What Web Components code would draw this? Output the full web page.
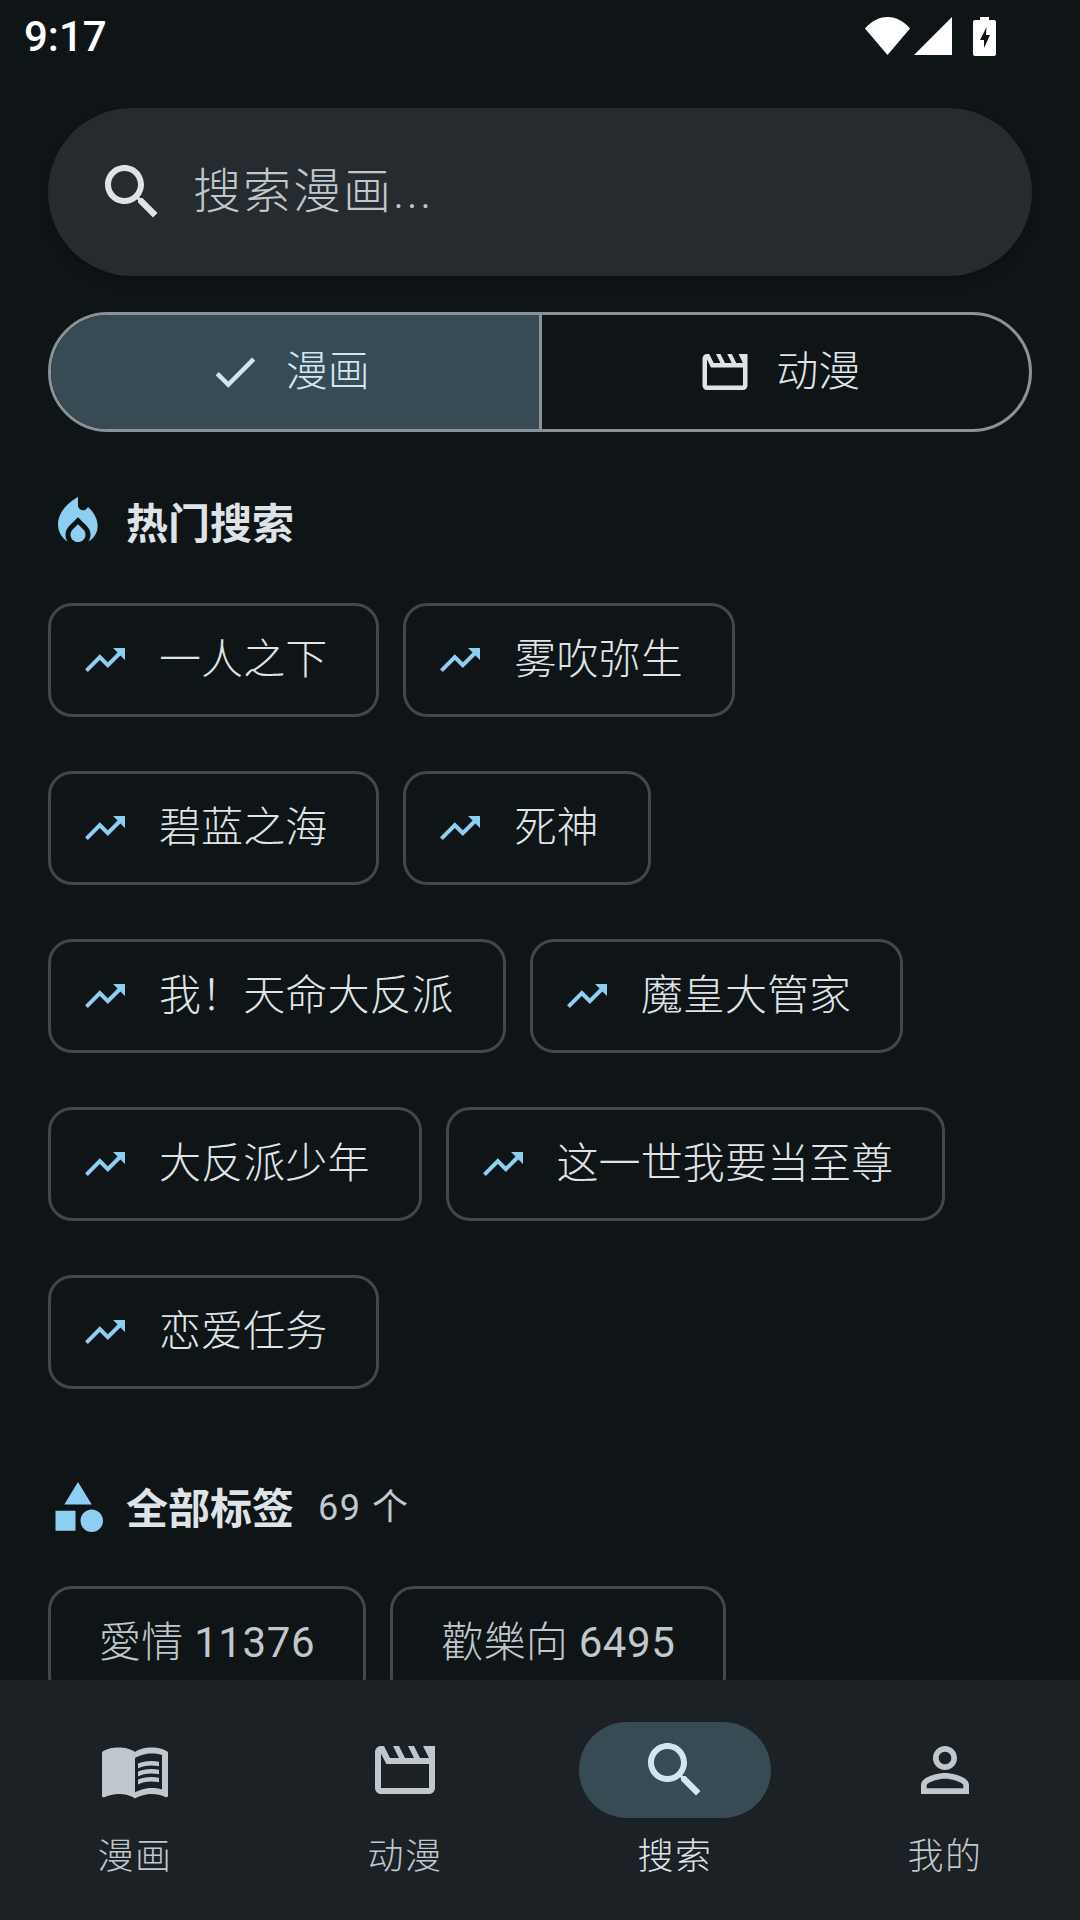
<!DOCTYPE html>
<html lang="zh-CN">
<head>
<meta charset="utf-8">
<title>搜索</title>
<style>
  html, body { margin: 0; background: #0f1416; }
  body { font-family: Roboto, "Noto Sans CJK SC", sans-serif; }
</style>
</head>
<body>
<search-page>
  <status-bar slot="status" time="9:17"></status-bar>
  <search-box placeholder="搜索漫画..."></search-box>
  <segment-group>
    <segment-button selected icon="done">漫画</segment-button>
    <segment-button icon="movie">动漫</segment-button>
  </segment-group>
  <section-title icon="fire">热门搜索</section-title>
  <chip-list>
    <hot-chip>一人之下</hot-chip>
    <hot-chip>雾吹弥生</hot-chip>
    <hot-chip>碧蓝之海</hot-chip>
    <hot-chip>死神</hot-chip>
    <hot-chip>我！天命大反派</hot-chip>
    <hot-chip>魔皇大管家</hot-chip>
    <hot-chip>大反派少年</hot-chip>
    <hot-chip>这一世我要当至尊</hot-chip>
    <hot-chip>恋爱任务</hot-chip>
  </chip-list>
  <section-title icon="category" count="69 个" style="margin-top: 88px">全部标签</section-title>
  <chip-list style="margin-top: 49px">
    <tag-chip count="11376">愛情</tag-chip>
    <tag-chip count="6495">歡樂向</tag-chip>
  </chip-list>
  <bottom-nav slot="nav">
    <nav-item icon="book">漫画</nav-item>
    <nav-item icon="movie">动漫</nav-item>
    <nav-item icon="search" active>搜索</nav-item>
    <nav-item icon="person">我的</nav-item>
  </bottom-nav>
</search-page>

<script>
const ICONS = {
  search: 'M15.5 14h-.79l-.28-.27C15.41 12.59 16 11.11 16 9.5 16 5.91 13.09 3 9.5 3S3 5.91 3 9.5 5.91 16 9.5 16c1.61 0 3.09-.59 4.23-1.57l.27.28v.79l5 4.99L20.49 19l-4.99-5zm-6 0C7.01 14 5 11.99 5 9.5S7.01 5 9.5 5 14 7.01 14 9.5 11.99 14 9.5 14z',
  done: 'M9 16.2L4.8 12l-1.4 1.4L9 19 21 7l-1.4-1.4L9 16.2z',
  movie: 'M4 6.47L5.76 10H20v8H4V6.47M22 4h-4l2 4h-3l-2-4h-2l2 4h-3l-2-4H8l2 4H7L5 4H4c-1.1 0-1.99.9-1.99 2L2 18c0 1.1.9 2 2 2h16c1.1 0 2-.9 2-2V4z',
  trend: 'M16 6l2.29 2.29-4.88 4.88-4-4L2 16.59 3.41 18l6-6 4 4 6.3-6.29L22 12V6z',
  fire: 'M12 12.9l-2.13 2.09C9.31 15.55 9 16.28 9 17.06 9 18.68 10.35 20 12 20s3-1.32 3-2.94c0-.78-.31-1.52-.87-2.07L12 12.9zM16 6l-.44.55C14.38 8.02 12 7.19 12 5.3V2S4 6 4 13c0 2.92 1.56 5.47 3.89 6.86C7.33 19.07 7 18.1 7 17.06c0-1.32.52-2.56 1.47-3.5L12 10.1l3.53 3.47c.95.94 1.47 2.18 1.47 3.5 0 1.03-.32 1.98-.86 2.77 1.74-1.06 3.1-2.73 3.56-4.77C20.4 11.6 18.6 8.3 16 6z',
  category: 'M11 13.5v8H3v-8h8zM12 2l5.5 9h-11L12 2zM17.5 13c2.5 0 4.5 2 4.5 4.5S20 22 17.5 22 13 20 13 17.5 15 13 17.5 13z',
  book: 'M21 5c-1.11-.35-2.33-.5-3.5-.5-1.95 0-4.05.4-5.5 1.5-1.45-1.1-3.55-1.5-5.5-1.5S2.45 4.9 1 6v14.65c0 .25.25.5.5.5.1 0 .15-.05.25-.05C3.1 20.45 5.05 20 6.5 20c1.95 0 4.05.4 5.5 1.5 1.35-.85 3.8-1.5 5.5-1.5 1.65 0 3.35.3 4.75 1.05.1.05.15.05.25.05.25 0 .5-.25.5-.5V6c-.6-.45-1.25-.75-2-1zm0 13.5c-1.1-.35-2.3-.5-3.5-.5-1.7 0-4.15.65-5.5 1.5V8c1.35-.85 3.8-1.5 5.5-1.5 1.2 0 2.4.15 3.5.5v11.5zM17.5 10.5c.88 0 1.73.09 2.5.26V9.24c-.79-.15-1.64-.24-2.5-.24-1.7 0-3.24.29-4.5.83v1.66c1.13-.64 2.7-.99 4.5-.99zM13 12.49v1.66c1.13-.64 2.7-.99 4.5-.99.88 0 1.73.09 2.5.26V11.9c-.79-.15-1.64-.24-2.5-.24-1.7 0-3.24.3-4.5.83zM17.5 14.33c-1.7 0-3.24.29-4.5.83v1.66c1.13-.64 2.7-.99 4.5-.99.88 0 1.73.09 2.5.26v-1.52c-.79-.16-1.64-.24-2.5-.24z',
  person: 'M12 5.9c1.16 0 2.1.94 2.1 2.1s-.94 2.1-2.1 2.1S9.9 9.16 9.9 8s.94-2.1 2.1-2.1m0 9c2.97 0 6.1 1.46 6.1 2.1v1.1H5.9V17c0-.64 3.13-2.1 6.1-2.1M12 4C9.79 4 8 5.79 8 8s1.79 4 4 4 4-1.79 4-4-1.79-4-4-4zm0 9c-2.67 0-8 1.34-8 4v3h16v-3c0-2.66-5.33-4-8-4z',
};

const svgIcon = (name, size) =>
  `<svg width="${size}" height="${size}" viewBox="0 0 24 24" fill="currentColor" aria-hidden="true"><path d="${ICONS[name]}"/></svg>`;

class BaseElement extends HTMLElement {
  constructor() {
    super();
    this.attachShadow({ mode: 'open' });
  }
}

class SearchPage extends BaseElement {
  connectedCallback() {
    this.shadowRoot.innerHTML = `
      <style>
        :host {
          display: flex;
          flex-direction: column;
          width: 1080px;
          height: 1920px;
          overflow: hidden;
          background: #0f1416;
          color: #dfe3e7;
        }
        main {
          flex: 1;
          min-height: 0;
          overflow: hidden;
          padding: 0 48px;
        }
      </style>
      <slot name="status"></slot>
      <main><slot></slot></main>
      <slot name="nav"></slot>
    `;
  }
}

class StatusBar extends BaseElement {
  connectedCallback() {
    this.shadowRoot.innerHTML = `
      <style>
        :host {
          display: flex;
          align-items: center;
          justify-content: space-between;
          flex: none;
          height: 72px;
          margin-bottom: 36px;
          padding: 0 84px 0 24px;
          color: #fff;
          font: 500 42px/72px Roboto, sans-serif;
        }
        .time { padding-top: 2px; }
        .icons { display: flex; align-items: center; gap: 4px; }
        .battery { margin-left: 17px; }
        svg { display: block; }
      </style>
      <span class="time">${this.getAttribute('time')}</span>
      <div class="icons">
        <svg width="45" height="38" viewBox="0 0 45 38" fill="currentColor"><path d="M0 11.5C6 4.500 13.600 0 22.500 0S39 4.500 45 11.500L22.500 38z"/></svg>
        <svg width="38" height="38" viewBox="0 0 38 38" fill="currentColor"><path d="M38 0v38H0z"/></svg>
        <svg class="battery" width="23" height="39" viewBox="0 0 23 39" fill="currentColor"><path fill-rule="evenodd" d="M7 0h9v3h5c1.100 0 2 .9 2 2v32c0 1.100-.9 2-2 2H2c-1.100 0-2-.9-2-2V5c0-1.100.9-2 2-2h5zM13.500 10l-6.500 13h4v8l6-13h-4z"/></svg>
      </div>
    `;
  }
}

class SearchBox extends BaseElement {
  connectedCallback() {
    this.shadowRoot.innerHTML = `
      <style>
        :host {
          display: flex;
          align-items: center;
          gap: 25px;
          height: 168px;
          padding-left: 48px;
          border-radius: 84px;
          background: #252b2e;
          color: #c0c7cd;
          box-shadow: 0 6px 12px rgba(0, 0, 0, .22);
          font: 300 48px/72px Roboto, "Noto Sans CJK SC", sans-serif;
          letter-spacing: 2px;
        }
        svg { display: block; color: #dfe3e7; }
      </style>
      ${svgIcon('search', 72)}
      <span>${this.getAttribute('placeholder')}</span>
    `;
  }
}

class SegmentGroup extends BaseElement {
  connectedCallback() {
    this.shadowRoot.innerHTML = `
      <style>
        :host {
          display: flex;
          height: 120px;
          margin-top: 36px;
          box-sizing: border-box;
          border: 3px solid #8a9297;
          border-radius: 60px;
          overflow: hidden;
        }
      </style>
      <slot></slot>
    `;
  }
}

class SegmentButton extends BaseElement {
  connectedCallback() {
    this.shadowRoot.innerHTML = `
      <style>
        :host {
          flex: 1;
          display: flex;
          align-items: center;
          justify-content: center;
          gap: 24px;
          padding-right: 12px;
          color: #dfe3e7;
          font: 300 42px/60px Roboto, "Noto Sans CJK SC", sans-serif;
          letter-spacing: .1px;
        }
        :host([selected]) {
          background: #374b55;
          color: #d1e5f4;
          border-right: 3px solid #8a9297;
        }
        svg { display: block; }
      </style>
      ${svgIcon(this.getAttribute('icon'), 54)}
      <span><slot></slot></span>
    `;
  }
}

class SectionTitle extends BaseElement {
  connectedCallback() {
    const count = this.getAttribute('count');
    this.shadowRoot.innerHTML = `
      <style>
        :host {
          display: flex;
          align-items: center;
          gap: 24px;
          height: 60px;
          margin-top: 60px;
          color: #dfe3e7;
          font: 700 42px/60px Roboto, "Noto Sans CJK SC", sans-serif;
        }
        svg { display: block; color: #8ccff0; margin-right: -6px; }
        span { padding-top: 6px; }
        .count {
          color: #c0c7cd;
          font-weight: 400;
          font-size: 36px;
          letter-spacing: 1.5px;
          padding-top: 2px;
        }
      </style>
      ${svgIcon(this.getAttribute('icon'), 60)}
      <span><slot></slot></span>
      ${count ? `<span class="count">${count}</span>` : ''}
    `;
  }
}

class ChipList extends BaseElement {
  connectedCallback() {
    this.shadowRoot.innerHTML = `
      <style>
        :host {
          display: flex;
          flex-wrap: wrap;
          gap: 54px 24px;
          margin-top: 51px;
        }
      </style>
      <slot></slot>
    `;
  }
}

class HotChip extends BaseElement {
  connectedCallback() {
    this.shadowRoot.innerHTML = `
      <style>
        :host {
          display: flex;
          align-items: center;
          gap: 30px;
          height: 114px;
          box-sizing: border-box;
          padding: 0 49px 0 30px;
          border: 3px solid #40484c;
          border-radius: 24px;
          color: #dfe3e7;
          font: 300 42px/60px Roboto, "Noto Sans CJK SC", sans-serif;
          letter-spacing: .1px;
        }
        svg { display: block; color: #8ccff0; }
      </style>
      ${svgIcon('trend', 48)}
      <span><slot></slot></span>
    `;
  }
}

class TagChip extends BaseElement {
  connectedCallback() {
    this.shadowRoot.innerHTML = `
      <style>
        :host {
          display: flex;
          align-items: center;
          height: 114px;
          box-sizing: border-box;
          padding: 0 48px;
          border: 3px solid #40484c;
          border-radius: 24px;
          color: #c0c7cd;
          font: 300 42px/60px Roboto, "Noto Sans CJK SC", sans-serif;
          letter-spacing: .3px;
        }
        b { font-weight: 400; letter-spacing: .6px; }
      </style>
      <span><slot></slot> <b>${this.getAttribute('count')}</b></span>
    `;
  }
}

class BottomNav extends BaseElement {
  connectedCallback() {
    this.shadowRoot.innerHTML = `
      <style>
        :host {
          flex: none;
          display: grid;
          grid-template-columns: repeat(4, 1fr);
          height: 240px;
          background: #1b2124;
        }
      </style>
      <slot></slot>
    `;
  }
}

class NavItem extends BaseElement {
  connectedCallback() {
    this.shadowRoot.innerHTML = `
      <style>
        :host {
          display: flex;
          flex-direction: column;
          align-items: center;
          padding-top: 42px;
          color: #c0c7cd;
          font: 300 36px/48px Roboto, "Noto Sans CJK SC", sans-serif;
          letter-spacing: 1.5px;
        }
        .pill {
          display: flex;
          align-items: center;
          justify-content: center;
          width: 192px;
          height: 96px;
          border-radius: 48px;
        }
        :host([active]) { color: #dfe3e7; }
        :host([active]) .pill { background: #374b55; color: #d1e5f4; }
        svg { display: block; }
        .label { margin-top: 15px; }
      </style>
      <div class="pill">${svgIcon(this.getAttribute('icon'), 72)}</div>
      <span class="label"><slot></slot></span>
    `;
  }
}

customElements.define('search-page', SearchPage);
customElements.define('status-bar', StatusBar);
customElements.define('search-box', SearchBox);
customElements.define('segment-group', SegmentGroup);
customElements.define('segment-button', SegmentButton);
customElements.define('section-title', SectionTitle);
customElements.define('chip-list', ChipList);
customElements.define('hot-chip', HotChip);
customElements.define('tag-chip', TagChip);
customElements.define('bottom-nav', BottomNav);
customElements.define('nav-item', NavItem);
</script>
</body>
</html>
